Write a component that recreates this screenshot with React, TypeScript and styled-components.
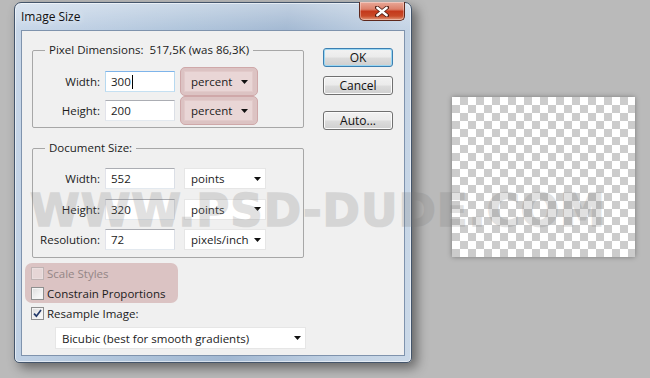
import React from "react";
import styled, { createGlobalStyle, css } from "styled-components";

const GlobalStyle = createGlobalStyle`
  html, body { margin: 0; padding: 0; }
  body {
    width: 650px;
    height: 378px;
    overflow: hidden;
    background: #bababa;
    font-family: "Open Sans", "Noto Sans", sans-serif;
    font-size: 11.5px;
    color: #1b1b1b;
  }
`;

const Page = styled.div`
  position: relative;
  width: 650px;
  height: 378px;
  box-sizing: border-box;
  padding: 2px 0 0 14px;
  display: flex;
  align-items: flex-start;
  background: #bababa;
  overflow: hidden;
`;

const Dialog = styled.div`
  width: 398px;
  height: 361px;
  box-sizing: border-box;
  border: 1px solid #44556b;
  border-radius: 7px 7px 5px 5px;
  padding: 0 6px 6px;
  display: flex;
  flex-direction: column;
  background:
    linear-gradient(to bottom, rgba(255, 255, 255, 0.35), rgba(255, 255, 255, 0) 28px),
    linear-gradient(100deg, #c8d7e9 0%, #aec3da 40%, #a2b8d2 60%, #c2d2e4 85%, #cbd9e8 100%);
  box-shadow: 5px 5px 12px rgba(0, 0, 0, 0.45), inset 0 0 0 1px rgba(255, 255, 255, 0.55);
  flex-shrink: 0;
`;

const TitleBar = styled.div`
  height: 27px;
  display: flex;
  align-items: flex-start;
  justify-content: space-between;
`;

const Title = styled.div`
  line-height: 27px;
  font-size: 12px;
  color: #101010;
  text-shadow: 0 0 6px rgba(255, 255, 255, 0.9);
`;

const CloseButton = styled.div`
  width: 46px;
  height: 19px;
  box-sizing: border-box;
  margin-top: -1px;
  border: 1px solid #5e281c;
  border-top: none;
  border-radius: 0 0 5px 5px;
  display: flex;
  align-items: center;
  justify-content: center;
  background: linear-gradient(
    to bottom,
    #e9a898 0%,
    #dc816b 40%,
    #c4391c 52%,
    #c84a28 78%,
    #e39a7c 100%
  );
  box-shadow: inset 0 0 0 1px rgba(255, 255, 255, 0.35);
`;

const Client = styled.div`
  flex: 1;
  display: flex;
  background: #f0f0f0;
  border: 1px solid #7f93ad;
`;

const LeftColumn = styled.div`
  width: 301px;
  box-sizing: border-box;
  padding: 11px 0 0 3px;
  display: flex;
  flex-direction: column;
`;

const RightColumn = styled.div`
  width: 70px;
  padding-top: 17px;
  display: flex;
  flex-direction: column;
`;

const GroupBox = styled.fieldset<{ $top: number; $padTop: number; $bottom: number }>`
  margin: ${(p) => p.$top}px 0 0 7px;
  width: 272px;
  box-sizing: border-box;
  min-width: 0;
  border: 1px solid #a7a7a7;
  border-radius: 2px;
  padding: ${(p) => p.$padTop}px 0 ${(p) => p.$bottom}px 0;
`;

const Legend = styled.legend`
  margin-left: 12px;
  padding: 0 4px;
  line-height: 16px;
  white-space: pre;
  color: #1b1b1b;
`;

const Rows = styled.div<{ $gap: number }>`
  display: flex;
  flex-direction: column;
  gap: ${(p) => p.$gap}px;
`;

const Row = styled.div`
  display: flex;
  align-items: center;
  height: 21px;
`;

const Label = styled.span`
  width: 67px;
  margin-right: 5px;
  text-align: right;
  white-space: nowrap;
`;

const Field = styled.div<{ $focused?: boolean }>`
  width: 70px;
  height: 21px;
  box-sizing: border-box;
  padding: 0 5px;
  display: flex;
  align-items: center;
  background: #fff;
  border: 1px solid;
  border-color: #abadb3 #dbdfe6 #e3e9ef #e2e3ea;
  ${(p) =>
    p.$focused &&
    css`
      border-color: #7eb4ea #b7d9f0 #c5e0f2 #b7d9f0;
    `}
`;

const Caret = styled.span`
  display: inline-block;
  width: 1px;
  height: 14px;
  background: #000;
  margin-left: 1px;
`;

const Dropdown = styled.div<{ $width: number; $tinted?: boolean }>`
  width: ${(p) => p.$width}px;
  height: 21px;
  box-sizing: border-box;
  padding: 0 4px 0 6px;
  display: flex;
  align-items: center;
  justify-content: space-between;
  background: #fff;
  border: 1px solid #e6e6e6;
  white-space: nowrap;
  ${(p) =>
    p.$tinted &&
    css`
      background: #e9d6d6;
      border-color: #e2caca;
    `}
`;

const Highlight = styled.div`
  margin: -4px -5px -4px 5px;
  padding: 3px 4px 3px 3px;
  border: 1px solid #cfa8a9;
  border-radius: 5px;
  background: #dcc3c3;
`;

const DocDropdownSpacer = styled.div`
  margin-left: 9px;
`;

const CheckHighlight = styled.div`
  margin-top: 5px;
  width: 153px;
  box-sizing: border-box;
  padding-left: 6px;
  border-radius: 7px;
  background: #dbc3c3;
`;

const CheckRow = styled.div<{ $indent?: boolean; $disabled?: boolean }>`
  height: 20px;
  display: flex;
  align-items: center;
  gap: 3px;
  margin-left: ${(p) => (p.$indent ? 6 : 0)}px;
  color: ${(p) => (p.$disabled ? "#948686" : "#1b1b1b")};
`;

const Box = styled.span<{ $disabled?: boolean }>`
  width: 13px;
  height: 13px;
  box-sizing: border-box;
  display: flex;
  align-items: center;
  justify-content: center;
  border: 1px solid ${(p) => (p.$disabled ? "#bfb3b3" : "#8e8f8f")};
  background: ${(p) =>
    p.$disabled
      ? "#e6d6d6"
      : "linear-gradient(135deg, #dcdcdc 0%, #f2f2f2 60%, #fbfbfb 100%)"};
  box-shadow: inset 0 0 0 1px ${(p) => (p.$disabled ? "#eadede" : "#f4f4f4")};
`;

const ResampleSelect = styled(Dropdown)`
  margin: 4px 0 0 30px;
  height: 22px;
`;

const Button = styled.div<{ $default?: boolean }>`
  height: 19px;
  box-sizing: border-box;
  display: flex;
  align-items: center;
  justify-content: center;
  border: 1px solid ${(p) => (p.$default ? "#3c7fb1" : "#707070")};
  border-radius: 3px;
  background: linear-gradient(
    to bottom,
    #f2f2f2 0%,
    #ebebeb 49%,
    #dddddd 51%,
    #cfcfcf 100%
  );
  box-shadow: inset 0 0 0 1px ${(p) => (p.$default ? "#9ad7f3" : "#fbfbfb")};
  color: #111;
  font-size: 12px;
`;

const ButtonGap = styled.div<{ $h: number }>`
  height: ${(p) => p.$h}px;
`;

const Canvas = styled.div`
  margin: 95px 0 0 40px;
  width: 183px;
  height: 160px;
  flex-shrink: 0;
  background: repeating-conic-gradient(#cccccc 0 25%, #ffffff 0 50%) 0 0 / 16px 16px;
  box-shadow: 0 0 5px rgba(0, 0, 0, 0.35);
`;

const Watermark = styled.div`
  position: absolute;
  left: 30px;
  top: 188px;
  font-family: "DejaVu Sans", sans-serif;
  font-weight: 700;
  font-size: 45px;
  line-height: 45px;
  letter-spacing: 1px;
  white-space: nowrap;
  color: #7a7a7a;
  -webkit-text-stroke: 1.5px #7a7a7a;
  opacity: 0.22;
  pointer-events: none;
  z-index: 2;
`;

const Arrow = () => (
  <svg width="7" height="4" viewBox="0 0 7 4">
    <path d="M0 0 H7 L3.5 4 Z" fill="#111" />
  </svg>
);

const CloseGlyph = () => (
  <svg width="14" height="11" viewBox="0 0 14 11">
    <path d="M2 1.5 L12 9.5 M12 1.5 L2 9.5" stroke="#4a1a10" strokeWidth="4" strokeLinecap="round" />
    <path d="M2.3 1.8 L11.7 9.2 M11.7 1.8 L2.3 9.2" stroke="#ffffff" strokeWidth="2.4" strokeLinecap="round" />
  </svg>
);

const CheckMark = () => (
  <svg width="9" height="9" viewBox="0 0 9 9">
    <path d="M1 4.6 L3.4 7.2 L8 1" stroke="#243a6a" strokeWidth="1.7" fill="none" />
  </svg>
);

type Pair = { label: string; value: string; unit: string; focused?: boolean };

const pixelRows: Pair[] = [
  { label: "Width:", value: "300", unit: "percent", focused: true },
  { label: "Height:", value: "200", unit: "percent" },
];

const docRows: Pair[] = [
  { label: "Width:", value: "552", unit: "points" },
  { label: "Height:", value: "320", unit: "points" },
  { label: "Resolution:", value: "72", unit: "pixels/inch" },
];

export default function App() {
  return (
    <>
      <GlobalStyle />
      <Page>
        <Dialog>
          <TitleBar>
            <Title>Image Size</Title>
            <CloseButton>
              <CloseGlyph />
            </CloseButton>
          </TitleBar>
          <Client>
            <LeftColumn>
              <GroupBox $top={0} $padTop={13} $bottom={6}>
                <Legend>{"Pixel Dimensions:  517,5K (was 86,3K)"}</Legend>
                <Rows $gap={8}>
                  {pixelRows.map((r) => (
                    <Row key={r.label}>
                      <Label>{r.label}</Label>
                      <Field $focused={r.focused}>
                        {r.value}
                        {r.focused && <Caret />}
                      </Field>
                      <Highlight>
                        <Dropdown $width={69} $tinted>
                          <span>{r.unit}</span>
                          <Arrow />
                        </Dropdown>
                      </Highlight>
                    </Row>
                  ))}
                </Rows>
              </GroupBox>
              <GroupBox $top={12} $padTop={12} $bottom={7}>
                <Legend>{"Document Size:"}</Legend>
                <Rows $gap={9.5}>
                  {docRows.map((r) => (
                    <Row key={r.label}>
                      <Label>{r.label}</Label>
                      <Field>{r.value}</Field>
                      <DocDropdownSpacer>
                        <Dropdown $width={82}>
                          <span>{r.unit}</span>
                          <Arrow />
                        </Dropdown>
                      </DocDropdownSpacer>
                    </Row>
                  ))}
                </Rows>
              </GroupBox>
              <CheckHighlight>
                <CheckRow $disabled>
                  <Box $disabled />
                  <span>Scale Styles</span>
                </CheckRow>
                <CheckRow>
                  <Box />
                  <span>Constrain Proportions</span>
                </CheckRow>
              </CheckHighlight>
              <CheckRow $indent>
                <Box>
                  <CheckMark />
                </Box>
                <span>Resample Image:</span>
              </CheckRow>
              <ResampleSelect $width={251}>
                <span>Bicubic (best for smooth gradients)</span>
                <Arrow />
              </ResampleSelect>
            </LeftColumn>
            <RightColumn>
              <Button $default>OK</Button>
              <ButtonGap $h={9} />
              <Button>Cancel</Button>
              <ButtonGap $h={16} />
              <Button>Auto...</Button>
            </RightColumn>
          </Client>
        </Dialog>
        <Canvas />
        <Watermark>WWW.PSD-DUDE.COM</Watermark>
      </Page>
    </>
  );
}
